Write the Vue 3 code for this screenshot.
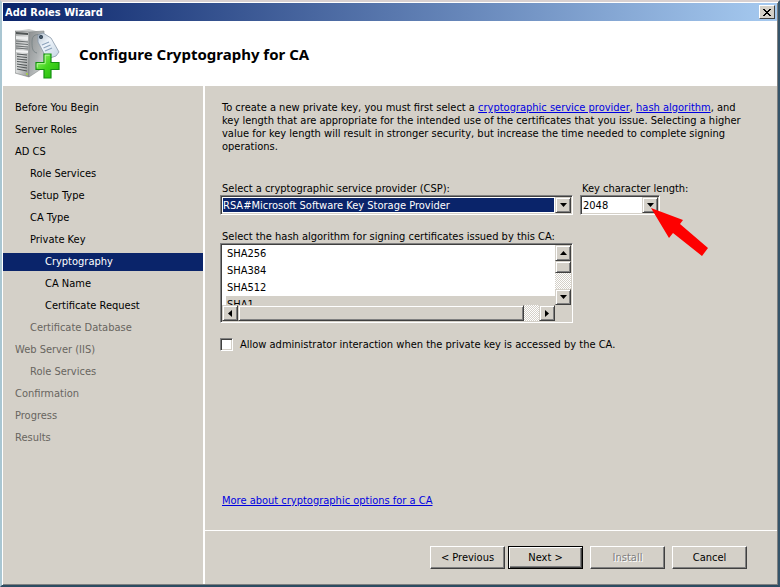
<script setup>
import { ref } from 'vue'

const steps = [
  { label: 'Before You Begin', level: 0 },
  { label: 'Server Roles', level: 0 },
  { label: 'AD CS', level: 0 },
  { label: 'Role Services', level: 1 },
  { label: 'Setup Type', level: 1 },
  { label: 'CA Type', level: 1 },
  { label: 'Private Key', level: 1 },
  { label: 'Cryptography', level: 2, current: true },
  { label: 'CA Name', level: 2 },
  { label: 'Certificate Request', level: 2 },
  { label: 'Certificate Database', level: 1, pending: true },
  { label: 'Web Server (IIS)', level: 0, pending: true },
  { label: 'Role Services', level: 1, pending: true },
  { label: 'Confirmation', level: 0, pending: true },
  { label: 'Progress', level: 0, pending: true },
  { label: 'Results', level: 0, pending: true },
]

const provider = ref('RSA#Microsoft Software Key Storage Provider')
const keyLength = ref('2048')
const hashes = ['SHA256', 'SHA384', 'SHA512', 'SHA1']
const hash = ref('SHA1')
const allowInteraction = ref(false)
</script>

<template>
  <div class="window">
    <header class="titlebar">
      <span class="title">Add Roles Wizard</span>
      <button class="close" type="button" aria-label="Close">
        <svg width="8" height="7" viewBox="0 0 8 7" shape-rendering="crispEdges"><path d="M0 0h2v1h1v1h2v-1h1v-1h2v1h-1v1h-1v1h-1v1h1v1h1v1h1v1h-2v-1h-1v-1h-2v1h-1v1h-2v-1h1v-1h1v-1h1v-1h-1v-1h-1v-1h-1z" /></svg>
      </button>
    </header>

    <div class="banner">
      <svg class="logo" width="48" height="50" viewBox="0 0 48 50" aria-hidden="true">
        <defs>
          <linearGradient id="front" x1="0" y1="0" x2="1" y2="1">
            <stop offset="0" stop-color="#a7a9a9" /><stop offset=".5" stop-color="#d9dbdb" /><stop offset="1" stop-color="#8f9292" />
          </linearGradient>
          <linearGradient id="side" x1="0" y1="0" x2="1" y2="1">
            <stop offset="0" stop-color="#8d9091" /><stop offset=".55" stop-color="#aeb2b3" /><stop offset="1" stop-color="#dfe2e2" />
          </linearGradient>
          <linearGradient id="tag" x1="0" y1="0" x2="1" y2="1">
            <stop offset="0" stop-color="#b4c2cf" /><stop offset=".4" stop-color="#eef4fa" /><stop offset="1" stop-color="#c3d3e2" />
          </linearGradient>
          <linearGradient id="plus" x1="0" y1="0" x2="1" y2="1">
            <stop offset="0" stop-color="#a4f77b" /><stop offset=".5" stop-color="#43d51e" /><stop offset="1" stop-color="#1fb40a" />
          </linearGradient>
        </defs>
        <path d="M1 2L14 0l14 4-13 0z" fill="#c9cccc" />
        <path d="M0 2l14 1v45L0 44z" fill="url(#front)" stroke="#777b7b" stroke-width=".6" />
        <path d="M14 3l15-1v36L14 48z" fill="url(#side)" stroke="#85898a" stroke-width=".6" />
        <path d="M1 3l12 1v2L1 5z" fill="#505555" />
        <path d="M1 7l12 1v3L1 10z" fill="#eceeee" />
        <path d="M1 12l12 1M1 14.500l12 1M1 17l12 1M1 19l12 1" stroke="#6a6f70" stroke-width="1" />
        <path d="M1 22l12 1" stroke="#f3f4f4" stroke-width="2" />
        <path d="M2 25l10 1M2 27.500l10 1M2 30l10 1M2 32.500l10 1M2 35l10 1.500M2 37.500l10 1.500M2 40l10 2" stroke="#515657" stroke-width="1.200" />
        <path d="M11 44l2 .5v1.500l-2-.5z" fill="#a6d13c" />
        <path d="M27 7c-5-3-10-1-10 5s0 11 5 12" fill="none" stroke="#7d8789" stroke-width="1" />
        <path d="M23 6l5-2 8 5 8 14-3 4-9 3-9-17z" fill="url(#tag)" stroke="#8998a8" stroke-width=".8" />
        <circle cx="26" cy="8" r="2" fill="#263746" />
        <circle cx="26" cy="8" r=".7" fill="#7e91a3" />
        <path d="M27 16l7-3M28.500 19l7-3M30 22l7-3" stroke="#8da3bb" stroke-width="1.200" />
        <path d="M29 25h7v8.500h8v7h-8V49h-7v-8.500h-8v-7h8z" fill="url(#plus)" stroke="#159211" stroke-width="1.200" />
        <path d="M30.200 34.500V26.200h4.500M22.200 38.500v-3.800h8" fill="none" stroke="#c6ffad" stroke-width=".8" />
      </svg>
      <h1>Configure Cryptography for CA</h1>
    </div>

    <div class="body">
      <nav class="steps" aria-label="Wizard steps">
        <a
          v-for="(s, i) in steps"
          :key="i"
          href="#"
          :class="['step', 'level-' + s.level, { current: s.current, pending: s.pending }]"
          :aria-current="s.current ? 'step' : undefined"
        >{{ s.label }}</a>
      </nav>

      <div class="pane">
        <main class="content">
          <p class="intro">
            To create a new private key, you must first select a <a href="#">cryptographic service provider</a>, <a href="#">hash algorithm</a>, and key length that are appropriate for the intended use of the certificates that you issue. Selecting a higher value for key length will result in stronger security, but increase the time needed to complete signing operations.
          </p>

          <div class="fields">
            <div class="field provider">
              <label for="csp">Select a cryptographic service provider (CSP):</label>
              <div class="combo focused">
                <select id="csp" v-model="provider">
                  <option>RSA#Microsoft Software Key Storage Provider</option>
                </select>
                <span class="knob"><svg width="7" height="4" viewBox="0 0 7 4"><path d="M0 0h7L3.500 4z" /></svg></span>
              </div>
            </div>
            <div class="field length">
              <label for="key-length">Key character length:</label>
              <div class="combo">
                <select id="key-length" v-model="keyLength">
                  <option>2048</option>
                </select>
                <span class="knob"><svg width="7" height="4" viewBox="0 0 7 4"><path d="M0 0h7L3.500 4z" /></svg></span>
                <svg class="pointer" width="60" height="50" viewBox="0 0 60 50" aria-hidden="true"><path d="M1 1l32 12-3 4 28 24-6 8-29-23-4 5z" fill="#fe0000" /></svg>
              </div>
            </div>
          </div>

          <div class="field hash">
            <span id="hash-label" class="label">Select the hash algorithm for signing certificates issued by this CA:</span>
            <div class="listbox">
              <ul role="listbox" aria-labelledby="hash-label" tabindex="0">
                <li v-for="h in hashes" :key="h" role="option" :aria-selected="h === hash" :class="{ selected: h === hash }" @click="hash = h">{{ h }}</li>
              </ul>
              <div class="bar vertical">
                <button class="knob" type="button" aria-label="Scroll up"><svg width="7" height="4" viewBox="0 0 7 4"><path d="M0 4h7L3.500 0z" /></svg></button>
                <span class="thumb"></span>
                <span class="track"></span>
                <button class="knob" type="button" aria-label="Scroll down"><svg width="7" height="4" viewBox="0 0 7 4"><path d="M0 0h7L3.500 4z" /></svg></button>
              </div>
              <div class="bar horizontal">
                <button class="knob" type="button" aria-label="Scroll left"><svg width="4" height="7" viewBox="0 0 4 7"><path d="M4 0v7L0 3.500z" /></svg></button>
                <span class="thumb"></span>
                <span class="track"></span>
                <button class="knob" type="button" aria-label="Scroll right"><svg width="4" height="7" viewBox="0 0 4 7"><path d="M0 0v7l4-3.500z" /></svg></button>
              </div>
            </div>
          </div>

          <label class="check">
            <input v-model="allowInteraction" type="checkbox" />
            <span>Allow administrator interaction when the private key is accessed by the CA.</span>
          </label>

          <a class="more" href="#">More about cryptographic options for a CA</a>
        </main>

        <footer class="actions">
          <button class="btn" type="button">&lt; Previous</button>
          <button class="btn primary" type="button">Next &gt;</button>
          <button class="btn apart" type="button" disabled>Install</button>
          <button class="btn apart" type="button">Cancel</button>
        </footer>
      </div>
    </div>
  </div>
</template>

<style>
body {
  background: #d4d0c8;
}
</style>

<style scoped>
* {
  box-sizing: border-box;
}
.window {
  display: flex;
  flex-direction: column;
  min-height: 100vh;
  background: #d4d0c8;
  border: 2px solid;
  border-color: #d8d0d0 #35546a #2c4c62 #a9c6d2;
  box-shadow: inset 1px 1px #fff, inset -1px -1px #808080;
  padding: 1px;
  font: 11px/13px "DejaVu Sans Condensed", "Noto Sans", sans-serif;
  color: #000;
}
button,
select {
  font: inherit;
  color: inherit;
  border-radius: 0;
  margin: 0;
}
.titlebar {
  display: flex;
  align-items: center;
  justify-content: space-between;
  height: 18px;
  padding: 0 2px;
  background: linear-gradient(90deg, #0a246a, #a6caf0);
}
.title {
  color: #fff;
  font-weight: bold;
}
.close {
  display: grid;
  place-items: center;
  width: 16px;
  height: 14px;
  padding: 0;
  background: #d4d0c8;
  border: 1px solid;
  border-color: #fff #404040 #404040 #fff;
}
.banner {
  display: flex;
  align-items: center;
  gap: 16px;
  height: 65px;
  padding: 0 12px;
  background: #fff;
}
h1 {
  margin: 0;
  font: bold 15px/20px "Noto Sans", sans-serif;
}
.body {
  display: flex;
  flex: 1;
}
.steps {
  width: 200px;
  padding-top: 11px;
}
.step {
  display: block;
  height: 22px;
  line-height: 22px;
  padding-left: 12px;
  color: #000;
  text-decoration: none;
}
.level-1 {
  padding-left: 27px;
}
.level-2 {
  padding-left: 42px;
}
.pending {
  color: #68655f;
}
.current {
  height: 18px;
  line-height: 18px;
  margin: 2px 0;
  background: #0a246a;
  color: #fff;
}
.pane {
  display: flex;
  flex: 1;
  flex-direction: column;
  border-left: 2px solid #fff;
}
.content {
  display: flex;
  flex: 1;
  flex-direction: column;
  padding: 15px 28px 23px 15px;
}
.intro {
  margin: 0 0 29px;
  padding-left: 2px;
}
a {
  color: #0000e0;
}
.fields {
  display: flex;
  gap: 7px;
  margin-bottom: 15px;
}
.field label,
.label {
  display: block;
  padding-left: 2px;
}
.provider {
  width: 353px;
}
.length .combo {
  width: 80px;
}
.combo,
.listbox {
  border: 1px solid;
  border-color: #808080 #fff #fff #808080;
  box-shadow: inset 1px 1px #404040, inset -1px -1px #d4d0c8;
}
.combo {
  position: relative;
  display: flex;
  height: 20px;
  padding: 1px;
  background: #fff;
  background-clip: content-box;
}
.combo select {
  flex: 1;
  min-width: 0;
  height: 16px;
  padding: 0 0 0 1px;
  border: 0;
  outline: 0;
  appearance: none;
  background: #fff;
}
.focused select {
  height: 14px;
  margin: 1px;
  padding: 0;
  background: #0a246a;
  color: #fff;
}
.knob,
.thumb {
  background: #d4d0c8;
  border: 1px solid;
  border-color: #d4d0c8 #404040 #404040 #d4d0c8;
  box-shadow: inset 1px 1px #fff, inset -1px -1px #808080;
}
.knob {
  display: grid;
  flex: none;
  place-items: center;
  width: 16px;
  height: 16px;
  padding: 0;
}
.combo .knob {
  pointer-events: none;
}
.pointer {
  position: absolute;
  left: 69px;
  top: 11px;
  pointer-events: none;
}
.hash {
  width: 353px;
  margin-bottom: 15px;
}
.listbox {
  display: grid;
  grid-template: 60px 16px / 1fr 16px;
  padding: 1px;
}
ul {
  margin: 0;
  padding: 0 0 0 4px;
  overflow: hidden;
  list-style: none;
  background: #fff;
}
li {
  height: 17px;
  line-height: 18px;
  padding-left: 1px;
}
.selected {
  background: #d4d0c8;
}
.bar {
  display: flex;
  background: repeating-conic-gradient(#fff 0 25%, #d4d0c8 0 50%) 0 0 / 2px 2px;
}
.vertical {
  flex-direction: column;
}
.vertical .thumb {
  height: 12px;
}
.track {
  flex: 1;
}
.horizontal .thumb {
  width: 86%;
}
.check {
  display: flex;
  align-items: center;
  gap: 7px;
}
.check input {
  width: 13px;
  height: 13px;
  margin: 0;
  appearance: none;
  background: #fff;
  border: 1px solid;
  border-color: #808080 #fff #fff #808080;
  box-shadow: inset 1px 1px #404040, inset -1px -1px #d4d0c8;
}
.check input:checked {
  background: #fff linear-gradient(#000, #000) center / 5px 5px no-repeat;
}
.more {
  align-self: flex-start;
  margin-top: auto;
  margin-left: 2px;
}
.actions {
  display: flex;
  justify-content: flex-end;
  gap: 3px;
  padding: 15px 30px 15px 0;
  border-top: 1px solid #fff;
}
.btn {
  width: 75px;
  height: 23px;
  padding: 0;
  background: #d4d0c8;
  border: 1px solid;
  border-color: #fff #404040 #404040 #fff;
  box-shadow: inset -1px -1px #808080;
}
.primary {
  border-color: #000;
  box-shadow: inset 1px 1px #fff, inset -1px -1px #404040, inset -2px -2px #808080;
}
.apart {
  margin-left: 4px;
}
.btn:disabled {
  color: #808080;
  text-shadow: 1px 1px #fff;
}
</style>
